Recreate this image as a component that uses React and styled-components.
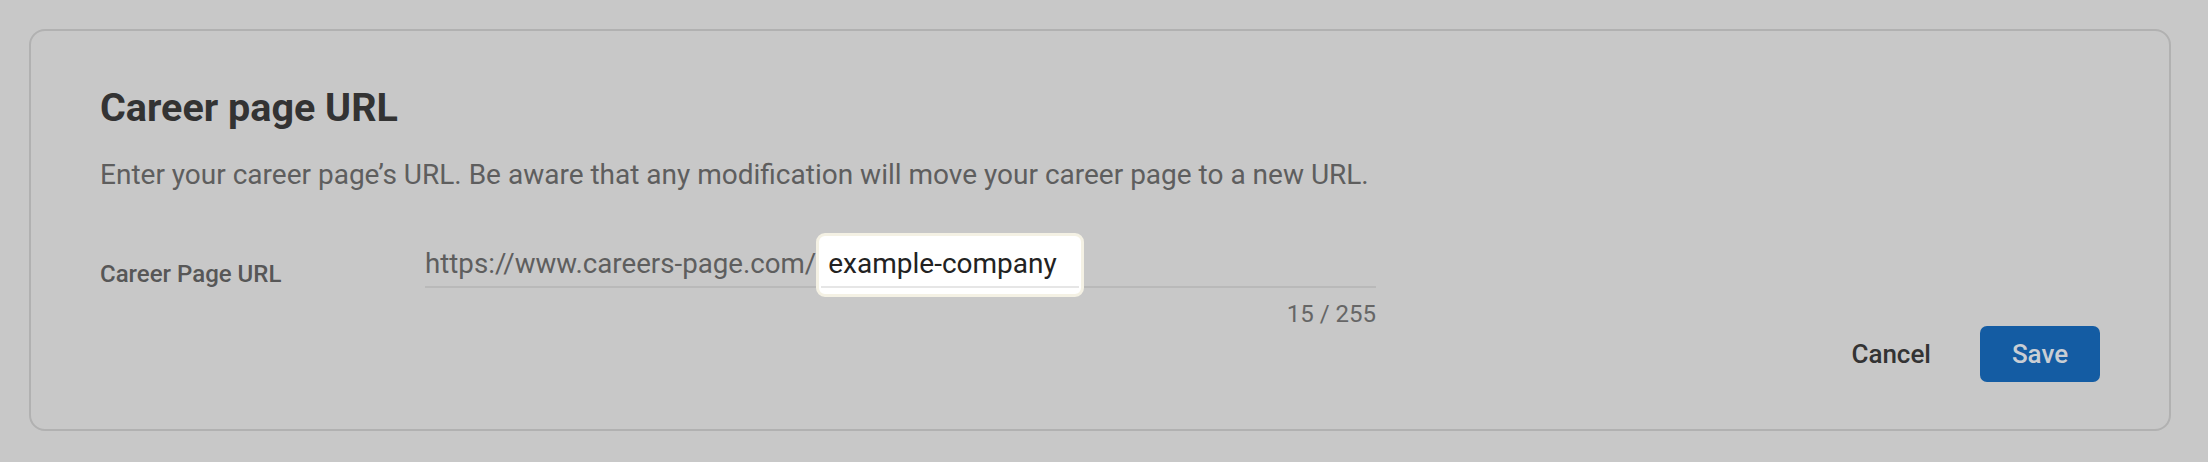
import React from "react";
import styled, { createGlobalStyle } from "styled-components";

const GlobalStyle = createGlobalStyle`
  html, body {
    margin: 0;
    padding: 0;
    background: #c8c8c8;
    font-family: Roboto, "Liberation Sans", sans-serif;
  }
`;

const Page = styled.div`
  padding: 29px 37px 0 29px;
`;

const Card = styled.section`
  box-sizing: border-box;
  border: 2px solid #b1b1b1;
  border-radius: 16px;
  padding: 54px 69px 47px 69px;
  display: flex;
  justify-content: space-between;
  align-items: flex-end;
`;

const Form = styled.div`
  display: flex;
  flex-direction: column;
  padding-bottom: 53px;
`;

const Title = styled.h2`
  margin: 0;
  font-size: 39.5px;
  line-height: 46px;
  font-weight: 700;
  color: #333;
  white-space: nowrap;
`;

const Description = styled.p`
  margin: 26px 0 0;
  font-size: 28px;
  line-height: 36px;
  color: #5e5e5e;
  white-space: nowrap;
`;

const FieldGrid = styled.div`
  display: grid;
  grid-template-columns: 325px 951px;
  margin-top: 40px;
`;

const Label = styled.label`
  margin-top: 26.5px;
  font-size: 24px;
  line-height: 28px;
  font-weight: 500;
  color: #575757;
  white-space: nowrap;
`;

const Field = styled.div`
  display: flex;
  flex-direction: column;
`;

const InputRow = styled.div`
  display: flex;
  align-items: baseline;
  padding-bottom: 4px;
  border-bottom: 2px solid #b9b9b9;
`;

const Prefix = styled.span`
  font-size: 27.7px;
  line-height: 36px;
  color: #5e5e5e;
  white-space: nowrap;
`;

const Value = styled.span`
  position: relative;
  display: inline-block;
  margin-bottom: -15px;
  padding: 10px 24px 12px 9px;
  border: 3px solid #f4f1e4;
  border-radius: 9px;
  background: #fff;
  font-size: 28px;
  line-height: 36px;
  color: #222;
  white-space: nowrap;

  &::after {
    content: "";
    position: absolute;
    left: 2px;
    right: 2px;
    bottom: 6px;
    height: 2px;
    background: #e6e6e6;
  }
`;

const Counter = styled.div`
  margin-top: 11px;
  text-align: right;
  font-size: 24px;
  line-height: 30px;
  color: #666;
`;

const Actions = styled.div`
  display: flex;
  align-items: center;
  gap: 29px;
`;

const Button = styled.button`
  box-sizing: border-box;
  min-width: ${(p) => (p.$primary ? "120px" : "0")};
  height: 56px;
  padding: 0 20px;
  border: none;
  border-radius: 7px;
  background: ${(p) => (p.$primary ? "#145ca3" : "transparent")};
  color: ${(p) => (p.$primary ? "#c9ced4" : "#333")};
  font-family: Roboto, "Liberation Sans", sans-serif;
  font-size: 26px;
  font-weight: 500;
  cursor: pointer;
`;

export default function App() {
  return (
    <Page>
      <GlobalStyle />
      <Card>
        <Form>
          <Title>Career page URL</Title>
          <Description>
            Enter your career page’s URL. Be aware that any modification will move your career page to a new URL.
          </Description>
          <FieldGrid>
            <Label>Career Page URL</Label>
            <Field>
              <InputRow>
                <Prefix>https://www.careers-page.com/</Prefix>
                <Value>example-company</Value>
              </InputRow>
              <Counter>15 / 255</Counter>
            </Field>
          </FieldGrid>
        </Form>
        <Actions>
          <Button>Cancel</Button>
          <Button $primary>Save</Button>
        </Actions>
      </Card>
    </Page>
  );
}
